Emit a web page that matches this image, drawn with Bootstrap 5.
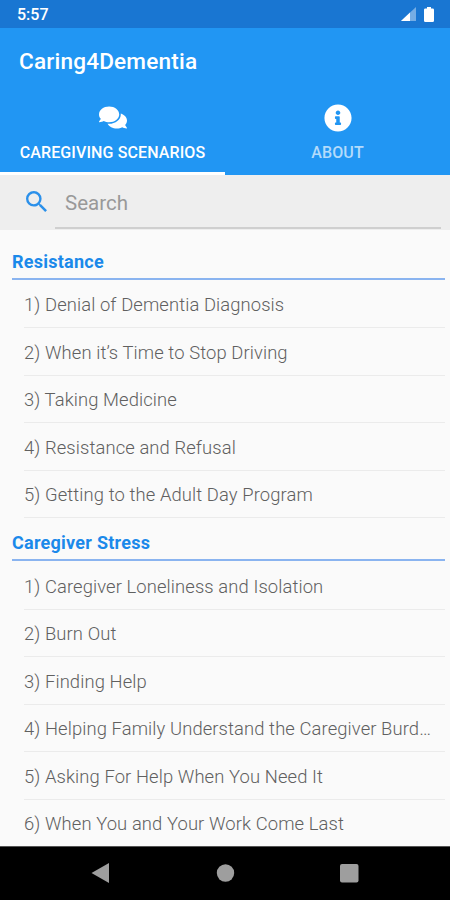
<!DOCTYPE html>
<html lang="en">
<head>
<meta charset="utf-8">
<meta name="viewport" content="width=device-width, initial-scale=1">
<title>Caring4Dementia</title>
<link href="https://cdn.jsdelivr.net/npm/bootstrap@5.3.0/dist/css/bootstrap.min.css" rel="stylesheet">
<style>
  body { font-family: Roboto, sans-serif; background: #fafafa; line-height: 1; }
  svg { display: block; }
  .app { height: 900px; }
  .status { height: 28px; background: #1976d2; padding: 0 16px 0 17px; font-size: 16px; font-weight: 500; }
  .status-time { padding-top: 2px; }
  .status-icons { gap: 8px; }
  .app-head { height: 146.5px; background: #2196f3; }
  .app-title { height: 67px; padding: 2px 19px 0; font-size: 22.6px; font-weight: 500; letter-spacing: .18px; }
  .app-tabs { height: 79.5px; }
  .app-tab { padding-top: 8px; font-size: 16px; font-weight: 500; border-bottom: 3px solid transparent; color: #b3dbfb; letter-spacing: .12px; }
  .app-tab.active { border-color: #fff; color: #fff; }
  .tab-icon { height: 29px; color: #fff; }
  .tab-text { margin-top: 13px; white-space: nowrap; }
  .search { height: 55.5px; background: #eee; padding: 0 9px 1px 26px; }
  .search-field { margin-left: 8px; padding: 4px 0 0 10px; border-bottom: 2px solid #cfcfcf; font-size: 20.5px; color: #999; }
  .topics { padding: 0 5px 0 12px; }
  .topic-title { height: 50px; font-size: 18px; font-weight: 700; color: #1b89ea; border-bottom: 2px solid #8ab4f0; padding-top: 23px; letter-spacing: .25px; }
  .topic-title.next { height: 43px; padding-top: 16px; }
  .scenario { height: 47.5px; margin-left: 12px; padding: 3px 8px 0 0; font-size: 18.4px; color: #606060; border-bottom: 1px solid #ebebeb; letter-spacing: .1px; font-weight: 300; }
  .topic-title + .scenario { height: 48.3px; padding-top: 4px; }
  .sysnav { height: 54px; background: #000; border-top: 1px solid #555; }
</style>
</head>
<body>
<div class="app d-flex flex-column overflow-hidden">
  <div class="status d-flex align-items-center justify-content-between text-white flex-shrink-0">
    <span class="status-time">5:57</span>
    <span class="status-icons d-flex align-items-center">
      <svg width="15" height="14" viewBox="0 0 15 14"><path d="M15 0v14H0z" fill="#75ade4"/><path d="M9 5.600V14H0z" fill="#fff"/></svg>
      <svg width="10" height="15" viewBox="0 0 10 16" preserveAspectRatio="none"><path d="M3 0h4v1.600h1.600q1.400 0 1.400 1.400v11.600q0 1.400-1.400 1.400H1.400Q0 16 0 14.600V3q0-1.400 1.400-1.400H3z" fill="#fff"/></svg>
    </span>
  </div>
  <header class="app-head text-white flex-shrink-0">
    <div class="app-title d-flex align-items-center">Caring4Dementia</div>
    <div class="app-tabs row g-0">
      <div class="app-tab active col-6 d-flex flex-column align-items-center">
        <span class="tab-icon d-flex align-items-center"><svg width="28" height="25" viewBox="0 0 576 512" fill="currentColor"><path d="M416 192c0-88.400-93.100-160-208-160S0 103.600 0 192c0 34.300 14.100 65.900 38 92-13.400 30.200-35.500 54.200-35.800 54.500-2.200 2.300-2.800 5.700-1.500 8.700S4.800 352 8 352c36.600 0 66.900-12.300 88.700-25 32.200 15.700 70.300 25 111.300 25 114.900 0 208-71.600 208-160zm122 220c23.900-26 38-57.700 38-92 0-66.900-53.500-124.200-129.300-148.100.9 6.600 1.300 13.300 1.300 20.100 0 105.900-107.700 192-240 192-10.800 0-21.300-.8-31.700-1.900C207.800 439.600 281.800 480 368 480c41 0 79.100-9.200 111.300-25 21.800 12.700 52.100 25 88.700 25 3.200 0 6.100-1.900 7.300-4.800 1.300-2.900.7-6.300-1.500-8.700-.3-.3-22.400-24.200-35.800-54.500z"/></svg></span>
        <span class="tab-text">CAREGIVING SCENARIOS</span>
      </div>
      <div class="app-tab col-6 d-flex flex-column align-items-center">
        <span class="tab-icon d-flex align-items-center"><svg width="28" height="28" viewBox="0 0 512 512" fill="currentColor"><path d="M256 8C119.043 8 8 119.083 8 256c0 136.997 111.043 248 248 248s248-111.003 248-248C504 119.083 392.957 8 256 8zm0 110c23.196 0 42 18.804 42 42s-18.804 42-42 42-42-18.804-42-42 18.804-42 42-42zm56 254c0 6.627-5.373 12-12 12h-88c-6.627 0-12-5.373-12-12v-24c0-6.627 5.373-12 12-12h12v-64h-12c-6.627 0-12-5.373-12-12v-24c0-6.627 5.373-12 12-12h64c6.627 0 12 5.373 12 12v100h12c6.627 0 12 5.373 12 12v24z"/></svg></span>
        <span class="tab-text">ABOUT</span>
      </div>
    </div>
  </header>
  <div class="search d-flex align-items-stretch flex-shrink-0">
    <span class="d-flex align-items-center"><svg width="21" height="21" viewBox="3 3 17.500 17.500" fill="#2b90ea"><path d="M15.500 14h-.79l-.28-.27A6.471 6.471 0 0 0 16 9.500 6.500 6.500 0 1 0 9.500 16c1.610 0 3.090-.59 4.230-1.570l.27.28v.79l5 4.990L20.490 19l-4.990-5zm-6 0C7.010 14 5 11.990 5 9.500S7.010 5 9.500 5 14 7.010 14 9.500 11.990 14 9.500 14z"/></svg></span>
    <div class="search-field d-flex align-items-center flex-grow-1">Search</div>
  </div>
  <main class="topics flex-grow-1 overflow-hidden">
    <div class="topic-title">Resistance</div>
    <div class="scenario d-flex align-items-center text-nowrap">1) Denial of Dementia Diagnosis</div>
    <div class="scenario d-flex align-items-center text-nowrap">2) When it’s Time to Stop Driving</div>
    <div class="scenario d-flex align-items-center text-nowrap">3) Taking Medicine</div>
    <div class="scenario d-flex align-items-center text-nowrap">4) Resistance and Refusal</div>
    <div class="scenario d-flex align-items-center text-nowrap">5) Getting to the Adult Day Program</div>
    <div class="topic-title next">Caregiver Stress</div>
    <div class="scenario d-flex align-items-center text-nowrap">1) Caregiver Loneliness and Isolation</div>
    <div class="scenario d-flex align-items-center text-nowrap">2) Burn Out</div>
    <div class="scenario d-flex align-items-center text-nowrap">3) Finding Help</div>
    <div class="scenario d-flex align-items-center text-nowrap">4) Helping Family Understand the Caregiver Burd…</div>
    <div class="scenario d-flex align-items-center text-nowrap">5) Asking For Help When You Need It</div>
    <div class="scenario d-flex align-items-center text-nowrap">6) When You and Your Work Come Last</div>
  </main>
  <nav class="sysnav d-flex justify-content-center flex-shrink-0">
    <svg width="270" height="53" viewBox="90 847 270 53" fill="#9e9e9e"><path d="M91.500 873l17.500-10v20z"/><circle cx="225.500" cy="873" r="8.700"/><rect x="340" y="864" width="18.500" height="18.500" rx="2"/></svg>
  </nav>
</div>
<script src="https://cdn.jsdelivr.net/npm/bootstrap@5.3.0/dist/js/bootstrap.bundle.min.js"></script>
</body>
</html>
